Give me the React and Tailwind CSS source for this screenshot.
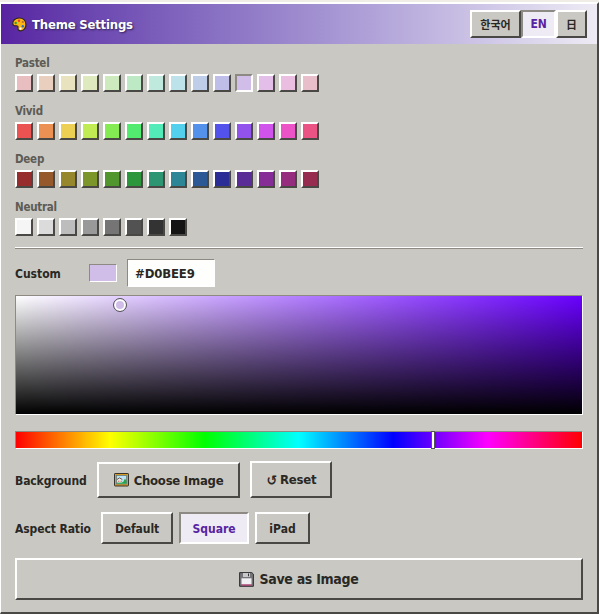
import React from "react";

const RAISED = "border-2 border-t-white border-l-white border-r-[#494844] border-b-[#494844]";
const SUNKEN = "border-2 border-t-[#8d8a84] border-l-[#8d8a84] border-r-white border-b-white";

const PALETTES = [
  { name: "Pastel", colors: ["#e9bec0", "#e9d0be", "#e9e2be", "#dfe9be", "#cde9be", "#bee9c5", "#bee9dc", "#bee2e9", "#becee9", "#bfbee9", "#d0bee9", "#e3bee9", "#e9bee0", "#e9becb"] },
  { name: "Vivid", colors: ["#eb5353", "#eb9153", "#ebd053", "#c1eb53", "#85eb53", "#53eb6f", "#53ebb7", "#53d0eb", "#5391eb", "#5353eb", "#9153eb", "#d053eb", "#eb53c6", "#eb5384"] },
  { name: "Deep", colors: ["#962c2c", "#96592c", "#96862c", "#7c962c", "#50962c", "#2c963c", "#2c9672", "#2c8696", "#2c5996", "#2c2c96", "#592c96", "#862c96", "#962c7e", "#962c4f"] },
  { name: "Neutral", colors: ["#f5f5f5", "#dbdbdb", "#bdbdbd", "#999999", "#757575", "#525252", "#333333", "#141414"] },
];

function Palette({ name, colors }) {
  return (
    <section className="h-12">
      <h2 className="h-[19px] text-[11.5px] leading-[17px] tracking-[-0.25px] text-[#5d5b55]">{name}</h2>
      <div className="flex gap-1">
        {colors.map((color) => (
          <button
            key={color}
            aria-label={color}
            className={`size-[18px] ${color === "#d0bee9" ? SUNKEN : RAISED}`}
            style={{ backgroundColor: color }}
          />
        ))}
      </div>
    </section>
  );
}

function PaletteIcon() {
  return (
    <svg width="15" height="15" viewBox="0 0 15 15">
      <path d="M7 1C3 1 .6 3.8.8 6.6 1 8.8 2.6 9 4 8.8c1.6-.2 2.2.7 2 2-.4 2.2 1 3.4 3.2 3 3-.5 4.9-3.5 4.7-6.6C13.7 3.5 10.8 1 7 1Z" fill="#fbb515" stroke="#29241c" strokeWidth="1.1" />
      <circle cx="3.7" cy="6" r="1.2" fill="#24a343" />
      <circle cx="7" cy="3.8" r="1.2" fill="#e8432d" />
      <circle cx="10.8" cy="5" r="1.1" fill="#c06a26" />
      <circle cx="10.8" cy="9.3" r="1.2" fill="#2869cd" />
      <circle cx="8.5" cy="11.6" r="1.1" fill="#fff" />
    </svg>
  );
}

function PictureIcon() {
  return (
    <svg width="15" height="14" viewBox="0 0 15 14">
      <rect x=".5" y=".5" width="14" height="12.5" rx=".6" fill="#d99a25" stroke="#38332c" />
      <rect x="2.5" y="2.5" width="10" height="8.5" fill="#bce3f5" stroke="#56747e" strokeWidth=".7" />
      <path d="M3 10.8V9.5l4-.4 2 .2 2-3.8 1.4 2.5v2.8Z" fill="#28a348" />
      <path d="M3.4 6.5 5.5 5l2.5 1.5v3H3.6Z" fill="#f0f0e8" />
      <path d="M3 6.5 5.5 4.9 8.3 6.5" fill="none" stroke="#705351" />
      <path d="M4.2 8.2h1.2M6.6 8.2h1.2" stroke="#c4413c" />
    </svg>
  );
}

function DiskIcon() {
  return (
    <svg width="15" height="15" viewBox="0 0 15 15">
      <path d="M.6.6h12.2l1.6 1.5v12.2H.6Z" fill="#76757a" stroke="#302f33" />
      <path d="M4 1h7v4H4Z" fill="#c9c9cb" />
      <path d="M9 1.5h1v2.8H9Z" fill="#333" />
      <path d="M2.5 6.3h10V12.5h-10Z" fill="#f1f0f3" />
      <path d="M2 12.5h11v1H2Z" fill="#cb3273" />
    </svg>
  );
}

export default function App() {
  return (
    <main className="h-[614px] w-[599px] bg-[#f0ece6] pt-0.5 font-['DejaVu_Sans_Condensed','DejaVu_Sans','Noto_Sans_CJK_KR',sans-serif] font-bold text-[#292825] [font-stretch:condensed]">
      <div className="h-[612px] border-t-2 border-r-2 border-b-2 border-l border-t-white border-l-white border-r-[#494844] border-b-[#494844] bg-[#c9c8c2]">
        <header className="flex h-10 items-center justify-between bg-linear-to-r from-[#5823a2] to-[#eeebf4] pr-2.5 pl-[11px]">
          <h1 className="flex items-center gap-[5px] text-[13px] text-white">
            <PaletteIcon />
            <span className="pt-px tracking-[-0.2px] [text-shadow:1px_1px_2px_#302050]">Theme Settings</span>
          </h1>
          <div className="flex text-[12px]">
            <button className={`h-7 w-[51px] bg-[#c9c8c2] font-['Noto_Sans_CJK_KR',sans-serif] text-[11px] leading-6 font-bold ${RAISED}`}>한국어</button>
            <button className={`h-7 w-[35px] bg-[#eeebf4] pt-px leading-[23px] tracking-[-0.2px] text-[#5823a2] ${SUNKEN}`}>EN</button>
            <button className={`h-7 w-[31px] bg-[#c9c8c2] font-['Noto_Sans_CJK_JP',sans-serif] text-[11px] leading-6 font-bold ${RAISED}`}>日</button>
          </div>
        </header>

        <div className="pt-[11px] pr-3.5 pl-3.5">
          {PALETTES.map((palette) => (
            <Palette key={palette.name} {...palette} />
          ))}
          <div className="h-0.5 border-t border-b border-t-white border-b-[#8d8a84]" />

          <div className="mt-2.5 flex h-7 items-center text-[12px]">
            <span className="w-[74px] pt-0.5">Custom</span>
            <span className="mr-2.5 h-[18px] w-7 border border-t-[#8d8a84] border-r-white border-b-white border-l-[#8d8a84] bg-[#d0bee9]" />
            <input aria-label="Custom color" defaultValue="#D0BEE9" className="h-7 w-[88px] border border-t-[#8d8a84] border-r-white border-b-white border-l-[#8d8a84] bg-[#fefefc] px-[7px] text-[13px] tracking-[-0.15px] outline-none" />
          </div>

          <div className="relative mt-2 h-[120px] border border-t-[#8d8a84] border-r-white border-b-white border-l-[#8d8a84] bg-[linear-gradient(to_top,#000,transparent),linear-gradient(to_right,#fff,#6900ff)] bg-origin-padding">
            <span className="absolute top-[2px] left-[97px] size-3.5 rounded-full border border-[#555158] bg-[#d0bee9] shadow-[inset_0_0_0_2px_#fff]" />
          </div>
          <div className="relative mt-4 h-[18px] border border-t-[#8d8a84] border-r-white border-b-white border-l-[#8d8a84] bg-[linear-gradient(to_right,#f00,#ff0,#0f0,#0ff,#00f,#f0f,#f00)]">
            <span className="absolute -top-px left-[415px] h-[18px] w-1 border border-[#555] bg-white" />
          </div>

          <div className="mt-3 flex h-[37px] items-end text-[12px]">
            <span className="flex h-9 w-[82px] items-center pt-0.5 tracking-[-0.1px]">Background</span>
            <button className={`mr-2.5 flex h-9 w-[143px] items-center justify-center gap-[5px] text-[13px] ${RAISED}`}><PictureIcon /><span className="pt-px tracking-[-0.25px]">Choose Image</span></button>
            <button className={`flex h-[37px] w-[82px] items-center justify-center gap-[3px] text-[13px] ${RAISED}`}><span className="pl-px text-[14px] leading-4">↺</span><span className="tracking-[-0.2px]">Reset</span></button>
          </div>

          <div className="mt-3.5 flex h-8 items-center text-[12px]">
            <span className="w-[86px] pt-0.5 tracking-[-0.1px]">Aspect Ratio</span>
            <div className="flex gap-1.5">
              <button className={`h-8 w-[72px] pt-0.5 tracking-[-0.1px] ${RAISED}`}>Default</button>
              <button className={`h-8 w-[70px] bg-[#eeebf4] pt-0.5 text-[#5823a2] ${SUNKEN}`}>Square</button>
              <button className={`h-8 w-[55px] pt-0.5 ${RAISED}`}>iPad</button>
            </div>
          </div>

          <button className={`mt-3.5 flex h-[42px] w-full items-center justify-center gap-[5px] text-[14px] ${RAISED}`}><DiskIcon /><span className="pt-px tracking-[-0.3px]">Save as Image</span></button>
        </div>
      </div>
    </main>
  );
}
